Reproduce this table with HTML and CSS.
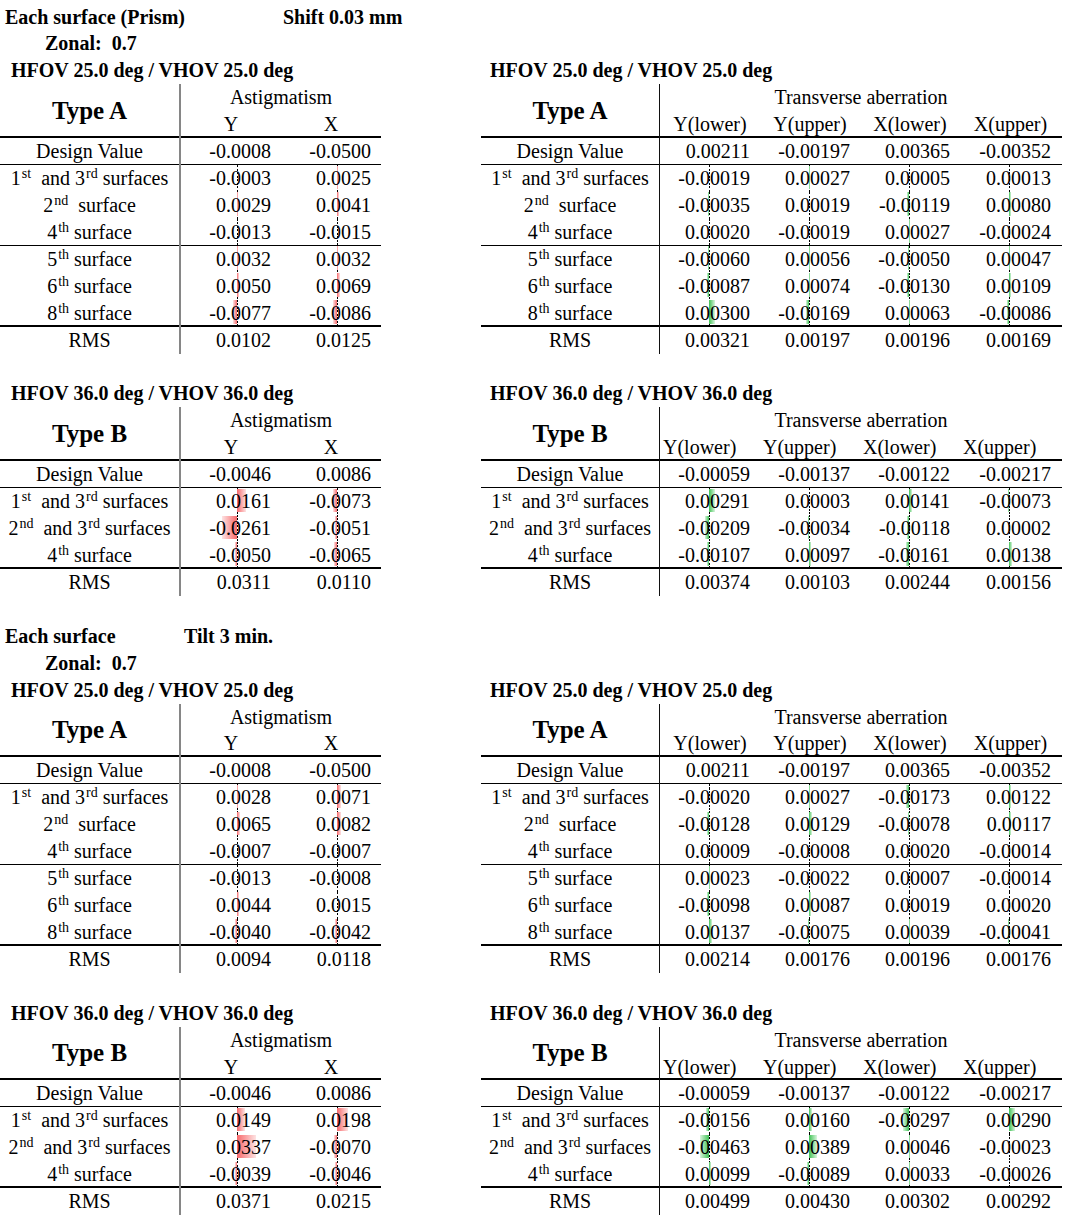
FILE: index.html
```html
<!DOCTYPE html>
<html lang="en">
<head>
<meta charset="utf-8">
<title>Each surface tolerance</title>
<link rel="stylesheet" href="styles.css">
</head>
<body>
<div class="sheet">

  <div class="line"><span class="main w-shift">Each surface (Prism)</span><span>Shift 0.03 mm</span></div>
  <div class="line zonal">Zonal:  0.7</div>

  <div class="pair">
    <section class="tbl astig">
      <div class="title">HFOV 25.0 deg / VHOV 25.0 deg</div>
      <div class="hdr"><div class="type">Type A</div><div class="cols"><div class="grp">Astigmatism</div><div class="subs"><div class="sh">Y</div><div class="sh">X</div></div></div></div>
      <div class="row b1"><div class="lbl">Design Value</div><div class="v"><span>-0.0008</span></div><div class="v"><span>-0.0500</span></div></div>
      <div class="row"><div class="lbl">1<sup>st</sup>  and 3<sup>rd</sup> surfaces</div><div class="v"><i class="ax"></i><span>-0.0003</span></div><div class="v"><i class="ax"></i><b class="bar p" style="width:0.8px"></b><span>0.0025</span></div></div>
      <div class="row"><div class="lbl">2<sup>nd</sup>  surface</div><div class="v"><i class="ax"></i><b class="bar p" style="width:1px"></b><span>0.0029</span></div><div class="v"><i class="ax"></i><b class="bar p" style="width:1.7px"></b><span>0.0041</span></div></div>
      <div class="row b1"><div class="lbl">4<sup>th</sup> surface</div><div class="v"><i class="ax"></i><span>-0.0013</span></div><div class="v"><i class="ax"></i><b class="bar n" style="width:0.3px"></b><span>-0.0015</span></div></div>
      <div class="row"><div class="lbl">5<sup>th</sup> surface</div><div class="v"><i class="ax"></i><b class="bar p" style="width:1.2px"></b><span>0.0032</span></div><div class="v"><i class="ax"></i><b class="bar p" style="width:1.2px"></b><span>0.0032</span></div></div>
      <div class="row"><div class="lbl">6<sup>th</sup> surface</div><div class="v"><i class="ax"></i><b class="bar p" style="width:2.2px"></b><span>0.0050</span></div><div class="v"><i class="ax"></i><b class="bar p" style="width:3.3px"></b><span>0.0069</span></div></div>
      <div class="row b2"><div class="lbl">8<sup>th</sup> surface</div><div class="v"><i class="ax"></i><b class="bar n" style="width:3.8px"></b><span>-0.0077</span></div><div class="v"><i class="ax"></i><b class="bar n" style="width:4.3px"></b><span>-0.0086</span></div></div>
      <div class="row"><div class="lbl">RMS</div><div class="v"><span>0.0102</span></div><div class="v"><span>0.0125</span></div></div>
    </section>
    <section class="tbl trans">
      <div class="title">HFOV 25.0 deg / VHOV 25.0 deg</div>
      <div class="hdr"><div class="type">Type A</div><div class="cols"><div class="grp">Transverse aberration</div><div class="subs"><div class="sh">Y(lower)</div><div class="sh">Y(upper)</div><div class="sh">X(lower)</div><div class="sh">X(upper)</div></div></div></div>
      <div class="row b1"><div class="lbl">Design Value</div><div class="v"><span>0.00211</span></div><div class="v"><span>-0.00197</span></div><div class="v"><span>0.00365</span></div><div class="v"><span>-0.00352</span></div></div>
      <div class="row"><div class="lbl">1<sup>st</sup>  and 3<sup>rd</sup> surfaces</div><div class="v"><i class="ax"></i><b class="bar n" style="width:0.4px"></b><span>-0.00019</span></div><div class="v"><i class="ax"></i><b class="bar p" style="width:0.5px"></b><span>0.00027</span></div><div class="v"><i class="ax"></i><span>0.00005</span></div><div class="v"><i class="ax"></i><b class="bar p" style="width:0.3px"></b><span>0.00013</span></div></div>
      <div class="row"><div class="lbl">2<sup>nd</sup>  surface</div><div class="v"><i class="ax"></i><b class="bar n" style="width:0.7px"></b><span>-0.00035</span></div><div class="v"><i class="ax"></i><b class="bar p" style="width:0.4px"></b><span>0.00019</span></div><div class="v"><i class="ax"></i><b class="bar n" style="width:2.3px"></b><span>-0.00119</span></div><div class="v"><i class="ax"></i><b class="bar p" style="width:1.6px"></b><span>0.00080</span></div></div>
      <div class="row b1"><div class="lbl">4<sup>th</sup> surface</div><div class="v"><i class="ax"></i><b class="bar p" style="width:0.4px"></b><span>0.00020</span></div><div class="v"><i class="ax"></i><b class="bar n" style="width:0.4px"></b><span>-0.00019</span></div><div class="v"><i class="ax"></i><b class="bar p" style="width:0.5px"></b><span>0.00027</span></div><div class="v"><i class="ax"></i><b class="bar n" style="width:0.5px"></b><span>-0.00024</span></div></div>
      <div class="row"><div class="lbl">5<sup>th</sup> surface</div><div class="v"><i class="ax"></i><b class="bar n" style="width:1.2px"></b><span>-0.00060</span></div><div class="v"><i class="ax"></i><b class="bar p" style="width:1.1px"></b><span>0.00056</span></div><div class="v"><i class="ax"></i><b class="bar n" style="width:1px"></b><span>-0.00050</span></div><div class="v"><i class="ax"></i><b class="bar p" style="width:0.9px"></b><span>0.00047</span></div></div>
      <div class="row"><div class="lbl">6<sup>th</sup> surface</div><div class="v"><i class="ax"></i><b class="bar n" style="width:1.7px"></b><span>-0.00087</span></div><div class="v"><i class="ax"></i><b class="bar p" style="width:1.4px"></b><span>0.00074</span></div><div class="v"><i class="ax"></i><b class="bar n" style="width:2.5px"></b><span>-0.00130</span></div><div class="v"><i class="ax"></i><b class="bar p" style="width:2.1px"></b><span>0.00109</span></div></div>
      <div class="row b2"><div class="lbl">8<sup>th</sup> surface</div><div class="v"><i class="ax"></i><b class="bar p" style="width:5.9px"></b><span>0.00300</span></div><div class="v"><i class="ax"></i><b class="bar n" style="width:3.3px"></b><span>-0.00169</span></div><div class="v"><i class="ax"></i><b class="bar p" style="width:1.2px"></b><span>0.00063</span></div><div class="v"><i class="ax"></i><b class="bar n" style="width:1.7px"></b><span>-0.00086</span></div></div>
      <div class="row"><div class="lbl">RMS</div><div class="v"><span>0.00321</span></div><div class="v"><span>0.00197</span></div><div class="v"><span>0.00196</span></div><div class="v"><span>0.00169</span></div></div>
    </section>
  </div>

  <div class="gap"></div>

  <div class="pair">
    <section class="tbl astig">
      <div class="title">HFOV 36.0 deg / VHOV 36.0 deg</div>
      <div class="hdr"><div class="type">Type B</div><div class="cols"><div class="grp">Astigmatism</div><div class="subs"><div class="sh">Y</div><div class="sh">X</div></div></div></div>
      <div class="row b1"><div class="lbl">Design Value</div><div class="v"><span>-0.0046</span></div><div class="v"><span>0.0086</span></div></div>
      <div class="row"><div class="lbl">1<sup>st</sup>  and 3<sup>rd</sup> surfaces</div><div class="v"><i class="ax"></i><b class="bar p" style="width:8.7px"></b><span>0.0161</span></div><div class="v"><i class="ax"></i><b class="bar n" style="width:3.6px"></b><span>-0.0073</span></div></div>
      <div class="row"><div class="lbl">2<sup>nd</sup>  and 3<sup>rd</sup> surfaces</div><div class="v"><i class="ax"></i><b class="bar n" style="width:14.6px"></b><span>-0.0261</span></div><div class="v"><i class="ax"></i><b class="bar n" style="width:2.3px"></b><span>-0.0051</span></div></div>
      <div class="row b2"><div class="lbl">4<sup>th</sup> surface</div><div class="v"><i class="ax"></i><b class="bar n" style="width:2.2px"></b><span>-0.0050</span></div><div class="v"><i class="ax"></i><b class="bar n" style="width:3.1px"></b><span>-0.0065</span></div></div>
      <div class="row"><div class="lbl">RMS</div><div class="v"><span>0.0311</span></div><div class="v"><span>0.0110</span></div></div>
    </section>
    <section class="tbl trans">
      <div class="title">HFOV 36.0 deg / VHOV 36.0 deg</div>
      <div class="hdr"><div class="type">Type B</div><div class="cols"><div class="grp">Transverse aberration</div><div class="subs lft"><div class="sh">Y(lower)</div><div class="sh">Y(upper)</div><div class="sh">X(lower)</div><div class="sh">X(upper)</div></div></div></div>
      <div class="row b1"><div class="lbl">Design Value</div><div class="v"><span>-0.00059</span></div><div class="v"><span>-0.00137</span></div><div class="v"><span>-0.00122</span></div><div class="v"><span>-0.00217</span></div></div>
      <div class="row"><div class="lbl">1<sup>st</sup>  and 3<sup>rd</sup> surfaces</div><div class="v"><i class="ax"></i><b class="bar p" style="width:5.7px"></b><span>0.00291</span></div><div class="v"><i class="ax"></i><span>0.00003</span></div><div class="v"><i class="ax"></i><b class="bar p" style="width:2.8px"></b><span>0.00141</span></div><div class="v"><i class="ax"></i><b class="bar n" style="width:1.4px"></b><span>-0.00073</span></div></div>
      <div class="row"><div class="lbl">2<sup>nd</sup>  and 3<sup>rd</sup> surfaces</div><div class="v"><i class="ax"></i><b class="bar n" style="width:4.1px"></b><span>-0.00209</span></div><div class="v"><i class="ax"></i><b class="bar n" style="width:0.7px"></b><span>-0.00034</span></div><div class="v"><i class="ax"></i><b class="bar n" style="width:2.3px"></b><span>-0.00118</span></div><div class="v"><i class="ax"></i><span>0.00002</span></div></div>
      <div class="row b2"><div class="lbl">4<sup>th</sup> surface</div><div class="v"><i class="ax"></i><b class="bar n" style="width:2.1px"></b><span>-0.00107</span></div><div class="v"><i class="ax"></i><b class="bar p" style="width:1.9px"></b><span>0.00097</span></div><div class="v"><i class="ax"></i><b class="bar n" style="width:3.1px"></b><span>-0.00161</span></div><div class="v"><i class="ax"></i><b class="bar p" style="width:2.7px"></b><span>0.00138</span></div></div>
      <div class="row"><div class="lbl">RMS</div><div class="v"><span>0.00374</span></div><div class="v"><span>0.00103</span></div><div class="v"><span>0.00244</span></div><div class="v"><span>0.00156</span></div></div>
    </section>
  </div>

  <div class="gap"></div>

  <div class="line"><span class="main w-tilt">Each surface</span><span>Tilt 3 min.</span></div>
  <div class="line zonal">Zonal:  0.7</div>

  <div class="pair">
    <section class="tbl astig">
      <div class="title">HFOV 25.0 deg / VHOV 25.0 deg</div>
      <div class="hdr"><div class="type">Type A</div><div class="cols"><div class="grp">Astigmatism</div><div class="subs"><div class="sh">Y</div><div class="sh">X</div></div></div></div>
      <div class="row b1"><div class="lbl">Design Value</div><div class="v"><span>-0.0008</span></div><div class="v"><span>-0.0500</span></div></div>
      <div class="row"><div class="lbl">1<sup>st</sup>  and 3<sup>rd</sup> surfaces</div><div class="v"><i class="ax"></i><b class="bar p" style="width:0.9px"></b><span>0.0028</span></div><div class="v"><i class="ax"></i><b class="bar p" style="width:3.5px"></b><span>0.0071</span></div></div>
      <div class="row"><div class="lbl">2<sup>nd</sup>  surface</div><div class="v"><i class="ax"></i><b class="bar p" style="width:3.1px"></b><span>0.0065</span></div><div class="v"><i class="ax"></i><b class="bar p" style="width:4.1px"></b><span>0.0082</span></div></div>
      <div class="row b1"><div class="lbl">4<sup>th</sup> surface</div><div class="v"><i class="ax"></i><span>-0.0007</span></div><div class="v"><i class="ax"></i><span>-0.0007</span></div></div>
      <div class="row"><div class="lbl">5<sup>th</sup> surface</div><div class="v"><i class="ax"></i><span>-0.0013</span></div><div class="v"><i class="ax"></i><span>-0.0008</span></div></div>
      <div class="row"><div class="lbl">6<sup>th</sup> surface</div><div class="v"><i class="ax"></i><b class="bar p" style="width:1.9px"></b><span>0.0044</span></div><div class="v"><i class="ax"></i><b class="bar p" style="width:0.3px"></b><span>0.0015</span></div></div>
      <div class="row b2"><div class="lbl">8<sup>th</sup> surface</div><div class="v"><i class="ax"></i><b class="bar n" style="width:1.6px"></b><span>-0.0040</span></div><div class="v"><i class="ax"></i><b class="bar n" style="width:1.8px"></b><span>-0.0042</span></div></div>
      <div class="row"><div class="lbl">RMS</div><div class="v"><span>0.0094</span></div><div class="v"><span>0.0118</span></div></div>
    </section>
    <section class="tbl trans">
      <div class="title">HFOV 25.0 deg / VHOV 25.0 deg</div>
      <div class="hdr"><div class="type">Type A</div><div class="cols"><div class="grp">Transverse aberration</div><div class="subs"><div class="sh">Y(lower)</div><div class="sh">Y(upper)</div><div class="sh">X(lower)</div><div class="sh">X(upper)</div></div></div></div>
      <div class="row b1"><div class="lbl">Design Value</div><div class="v"><span>0.00211</span></div><div class="v"><span>-0.00197</span></div><div class="v"><span>0.00365</span></div><div class="v"><span>-0.00352</span></div></div>
      <div class="row"><div class="lbl">1<sup>st</sup>  and 3<sup>rd</sup> surfaces</div><div class="v"><i class="ax"></i><b class="bar n" style="width:0.4px"></b><span>-0.00020</span></div><div class="v"><i class="ax"></i><b class="bar p" style="width:0.5px"></b><span>0.00027</span></div><div class="v"><i class="ax"></i><b class="bar n" style="width:3.4px"></b><span>-0.00173</span></div><div class="v"><i class="ax"></i><b class="bar p" style="width:2.4px"></b><span>0.00122</span></div></div>
      <div class="row"><div class="lbl">2<sup>nd</sup>  surface</div><div class="v"><i class="ax"></i><b class="bar n" style="width:2.5px"></b><span>-0.00128</span></div><div class="v"><i class="ax"></i><b class="bar p" style="width:2.5px"></b><span>0.00129</span></div><div class="v"><i class="ax"></i><b class="bar n" style="width:1.5px"></b><span>-0.00078</span></div><div class="v"><i class="ax"></i><b class="bar p" style="width:2.3px"></b><span>0.00117</span></div></div>
      <div class="row b1"><div class="lbl">4<sup>th</sup> surface</div><div class="v"><i class="ax"></i><span>0.00009</span></div><div class="v"><i class="ax"></i><span>-0.00008</span></div><div class="v"><i class="ax"></i><b class="bar p" style="width:0.4px"></b><span>0.00020</span></div><div class="v"><i class="ax"></i><b class="bar n" style="width:0.3px"></b><span>-0.00014</span></div></div>
      <div class="row"><div class="lbl">5<sup>th</sup> surface</div><div class="v"><i class="ax"></i><b class="bar p" style="width:0.5px"></b><span>0.00023</span></div><div class="v"><i class="ax"></i><b class="bar n" style="width:0.4px"></b><span>-0.00022</span></div><div class="v"><i class="ax"></i><span>0.00007</span></div><div class="v"><i class="ax"></i><b class="bar n" style="width:0.3px"></b><span>-0.00014</span></div></div>
      <div class="row"><div class="lbl">6<sup>th</sup> surface</div><div class="v"><i class="ax"></i><b class="bar n" style="width:1.9px"></b><span>-0.00098</span></div><div class="v"><i class="ax"></i><b class="bar p" style="width:1.7px"></b><span>0.00087</span></div><div class="v"><i class="ax"></i><b class="bar p" style="width:0.4px"></b><span>0.00019</span></div><div class="v"><i class="ax"></i><b class="bar p" style="width:0.4px"></b><span>0.00020</span></div></div>
      <div class="row b2"><div class="lbl">8<sup>th</sup> surface</div><div class="v"><i class="ax"></i><b class="bar p" style="width:2.7px"></b><span>0.00137</span></div><div class="v"><i class="ax"></i><b class="bar n" style="width:1.5px"></b><span>-0.00075</span></div><div class="v"><i class="ax"></i><b class="bar p" style="width:0.8px"></b><span>0.00039</span></div><div class="v"><i class="ax"></i><b class="bar n" style="width:0.8px"></b><span>-0.00041</span></div></div>
      <div class="row"><div class="lbl">RMS</div><div class="v"><span>0.00214</span></div><div class="v"><span>0.00176</span></div><div class="v"><span>0.00196</span></div><div class="v"><span>0.00176</span></div></div>
    </section>
  </div>

  <div class="gap"></div>

  <div class="pair">
    <section class="tbl astig">
      <div class="title">HFOV 36.0 deg / VHOV 36.0 deg</div>
      <div class="hdr"><div class="type">Type B</div><div class="cols"><div class="grp">Astigmatism</div><div class="subs"><div class="sh">Y</div><div class="sh">X</div></div></div></div>
      <div class="row b1"><div class="lbl">Design Value</div><div class="v"><span>-0.0046</span></div><div class="v"><span>0.0086</span></div></div>
      <div class="row"><div class="lbl">1<sup>st</sup>  and 3<sup>rd</sup> surfaces</div><div class="v"><i class="ax"></i><b class="bar p" style="width:8px"></b><span>0.0149</span></div><div class="v"><i class="ax"></i><b class="bar p" style="width:10.9px"></b><span>0.0198</span></div></div>
      <div class="row"><div class="lbl">2<sup>nd</sup>  and 3<sup>rd</sup> surfaces</div><div class="v"><i class="ax"></i><b class="bar p" style="width:19px"></b><span>0.0337</span></div><div class="v"><i class="ax"></i><b class="bar n" style="width:3.4px"></b><span>-0.0070</span></div></div>
      <div class="row b2"><div class="lbl">4<sup>th</sup> surface</div><div class="v"><i class="ax"></i><b class="bar n" style="width:1.6px"></b><span>-0.0039</span></div><div class="v"><i class="ax"></i><b class="bar n" style="width:2px"></b><span>-0.0046</span></div></div>
      <div class="row"><div class="lbl">RMS</div><div class="v"><span>0.0371</span></div><div class="v"><span>0.0215</span></div></div>
    </section>
    <section class="tbl trans">
      <div class="title">HFOV 36.0 deg / VHOV 36.0 deg</div>
      <div class="hdr"><div class="type">Type B</div><div class="cols"><div class="grp">Transverse aberration</div><div class="subs lft"><div class="sh">Y(lower)</div><div class="sh">Y(upper)</div><div class="sh">X(lower)</div><div class="sh">X(upper)</div></div></div></div>
      <div class="row b1"><div class="lbl">Design Value</div><div class="v"><span>-0.00059</span></div><div class="v"><span>-0.00137</span></div><div class="v"><span>-0.00122</span></div><div class="v"><span>-0.00217</span></div></div>
      <div class="row"><div class="lbl">1<sup>st</sup>  and 3<sup>rd</sup> surfaces</div><div class="v"><i class="ax"></i><b class="bar n" style="width:3px"></b><span>-0.00156</span></div><div class="v"><i class="ax"></i><b class="bar p" style="width:3.1px"></b><span>0.00160</span></div><div class="v"><i class="ax"></i><b class="bar n" style="width:5.8px"></b><span>-0.00297</span></div><div class="v"><i class="ax"></i><b class="bar p" style="width:5.7px"></b><span>0.00290</span></div></div>
      <div class="row"><div class="lbl">2<sup>nd</sup>  and 3<sup>rd</sup> surfaces</div><div class="v"><i class="ax"></i><b class="bar n" style="width:9px"></b><span>-0.00463</span></div><div class="v"><i class="ax"></i><b class="bar p" style="width:7.6px"></b><span>0.00389</span></div><div class="v"><i class="ax"></i><b class="bar p" style="width:0.9px"></b><span>0.00046</span></div><div class="v"><i class="ax"></i><b class="bar n" style="width:0.5px"></b><span>-0.00023</span></div></div>
      <div class="row b2"><div class="lbl">4<sup>th</sup> surface</div><div class="v"><i class="ax"></i><b class="bar p" style="width:1.9px"></b><span>0.00099</span></div><div class="v"><i class="ax"></i><b class="bar n" style="width:1.7px"></b><span>-0.00089</span></div><div class="v"><i class="ax"></i><b class="bar p" style="width:0.6px"></b><span>0.00033</span></div><div class="v"><i class="ax"></i><b class="bar n" style="width:0.5px"></b><span>-0.00026</span></div></div>
      <div class="row"><div class="lbl">RMS</div><div class="v"><span>0.00499</span></div><div class="v"><span>0.00430</span></div><div class="v"><span>0.00302</span></div><div class="v"><span>0.00292</span></div></div>
    </section>
  </div>

</div>
</body>
</html>
```

FILE: styles.css
```css
:root {
  --h: 26.93px;
}

* {
  box-sizing: border-box;
}

html,
body {
  margin: 0;
  background: #fff;
}

body {
  width: 1080px;
  font-family: "Liberation Serif", "Times New Roman", serif;
  font-size: 20px;
  color: #000;
}

.sheet {
  padding-top: 3.5px;
}

.line {
  display: flex;
  height: var(--h);
  line-height: var(--h);
  font-weight: bold;
  white-space: pre;
}

.main {
  padding-left: 5px;
}

.w-shift {
  width: 283px;
}

.w-tilt {
  width: 184px;
}

.zonal {
  padding-left: 45px;
}

.gap {
  height: var(--h);
}

.pair {
  display: flex;
  gap: 100px;
}

.tbl {
  display: flex;
  flex-direction: column;
}

.astig {
  width: 381px;
  --ax: 56px;
}

.trans {
  width: 581px;
  --ax: 49px;
}

.title {
  height: var(--h);
  line-height: var(--h);
  font-weight: bold;
  white-space: nowrap;
}

.astig .title {
  padding-left: 11px;
}

.trans .title {
  padding-left: 9px;
}

.hdr {
  display: flex;
  height: calc(var(--h) * 2);
  box-shadow: inset 0 -2px 0 #000;
}

.type {
  display: flex;
  align-items: center;
  justify-content: center;
  font-weight: bold;
  font-size: 25px;
  padding-bottom: 1px;
}

.type,
.lbl {
  flex: none;
}

.astig .type,
.astig .lbl {
  width: 181px;
  border-right: 2px solid #868686;
}

.trans .type,
.trans .lbl {
  width: 179px;
  border-right: 1px solid #111;
}

.cols {
  flex: 1;
  display: flex;
  flex-direction: column;
}

.grp {
  height: var(--h);
  line-height: var(--h);
  text-align: center;
}

.subs {
  display: flex;
  height: var(--h);
  line-height: var(--h);
}

.sh {
  width: 100px;
  text-align: center;
  white-space: nowrap;
}

.trans .sh:last-child,
.trans .v:last-child {
  width: 101px;
}

.subs.lft .sh {
  text-align: left;
  padding-left: 3px;
}

.row {
  display: flex;
  height: var(--h);
  line-height: var(--h);
}

.row.b1 {
  box-shadow: inset 0 -1px 0 #000;
}

.row.b2 {
  box-shadow: inset 0 -2px 0 #000;
}

.lbl {
  text-align: center;
  white-space: pre;
}

.v {
  position: relative;
  width: 100px;
  padding-right: 10px;
  text-align: right;
  white-space: nowrap;
}

.v span {
  position: relative;
}

.ax {
  position: absolute;
  top: 0;
  bottom: 0;
  left: var(--ax);
  width: 1px;
  background: repeating-linear-gradient(to bottom, #000 0, #000 2px, transparent 2px, transparent 3.5px);
}

.bar {
  position: absolute;
  top: 0.5px;
  bottom: 3px;
}

.bar.p {
  left: var(--ax);
}

.bar.n {
  right: calc(100% - var(--ax));
}

.astig .bar.p {
  background: linear-gradient(to right, #f8696b, #fde3e3);
}

.astig .bar.n {
  background: linear-gradient(to left, #f8696b, #fde3e3);
}

.trans .bar.p {
  background: linear-gradient(to right, #3fc254, #d8f4dc);
}

.trans .bar.n {
  background: linear-gradient(to left, #3fc254, #d8f4dc);
}

sup {
  font-size: 14px;
  line-height: 0;
  vertical-align: 7px;
  padding-left: 1px;
}
```
